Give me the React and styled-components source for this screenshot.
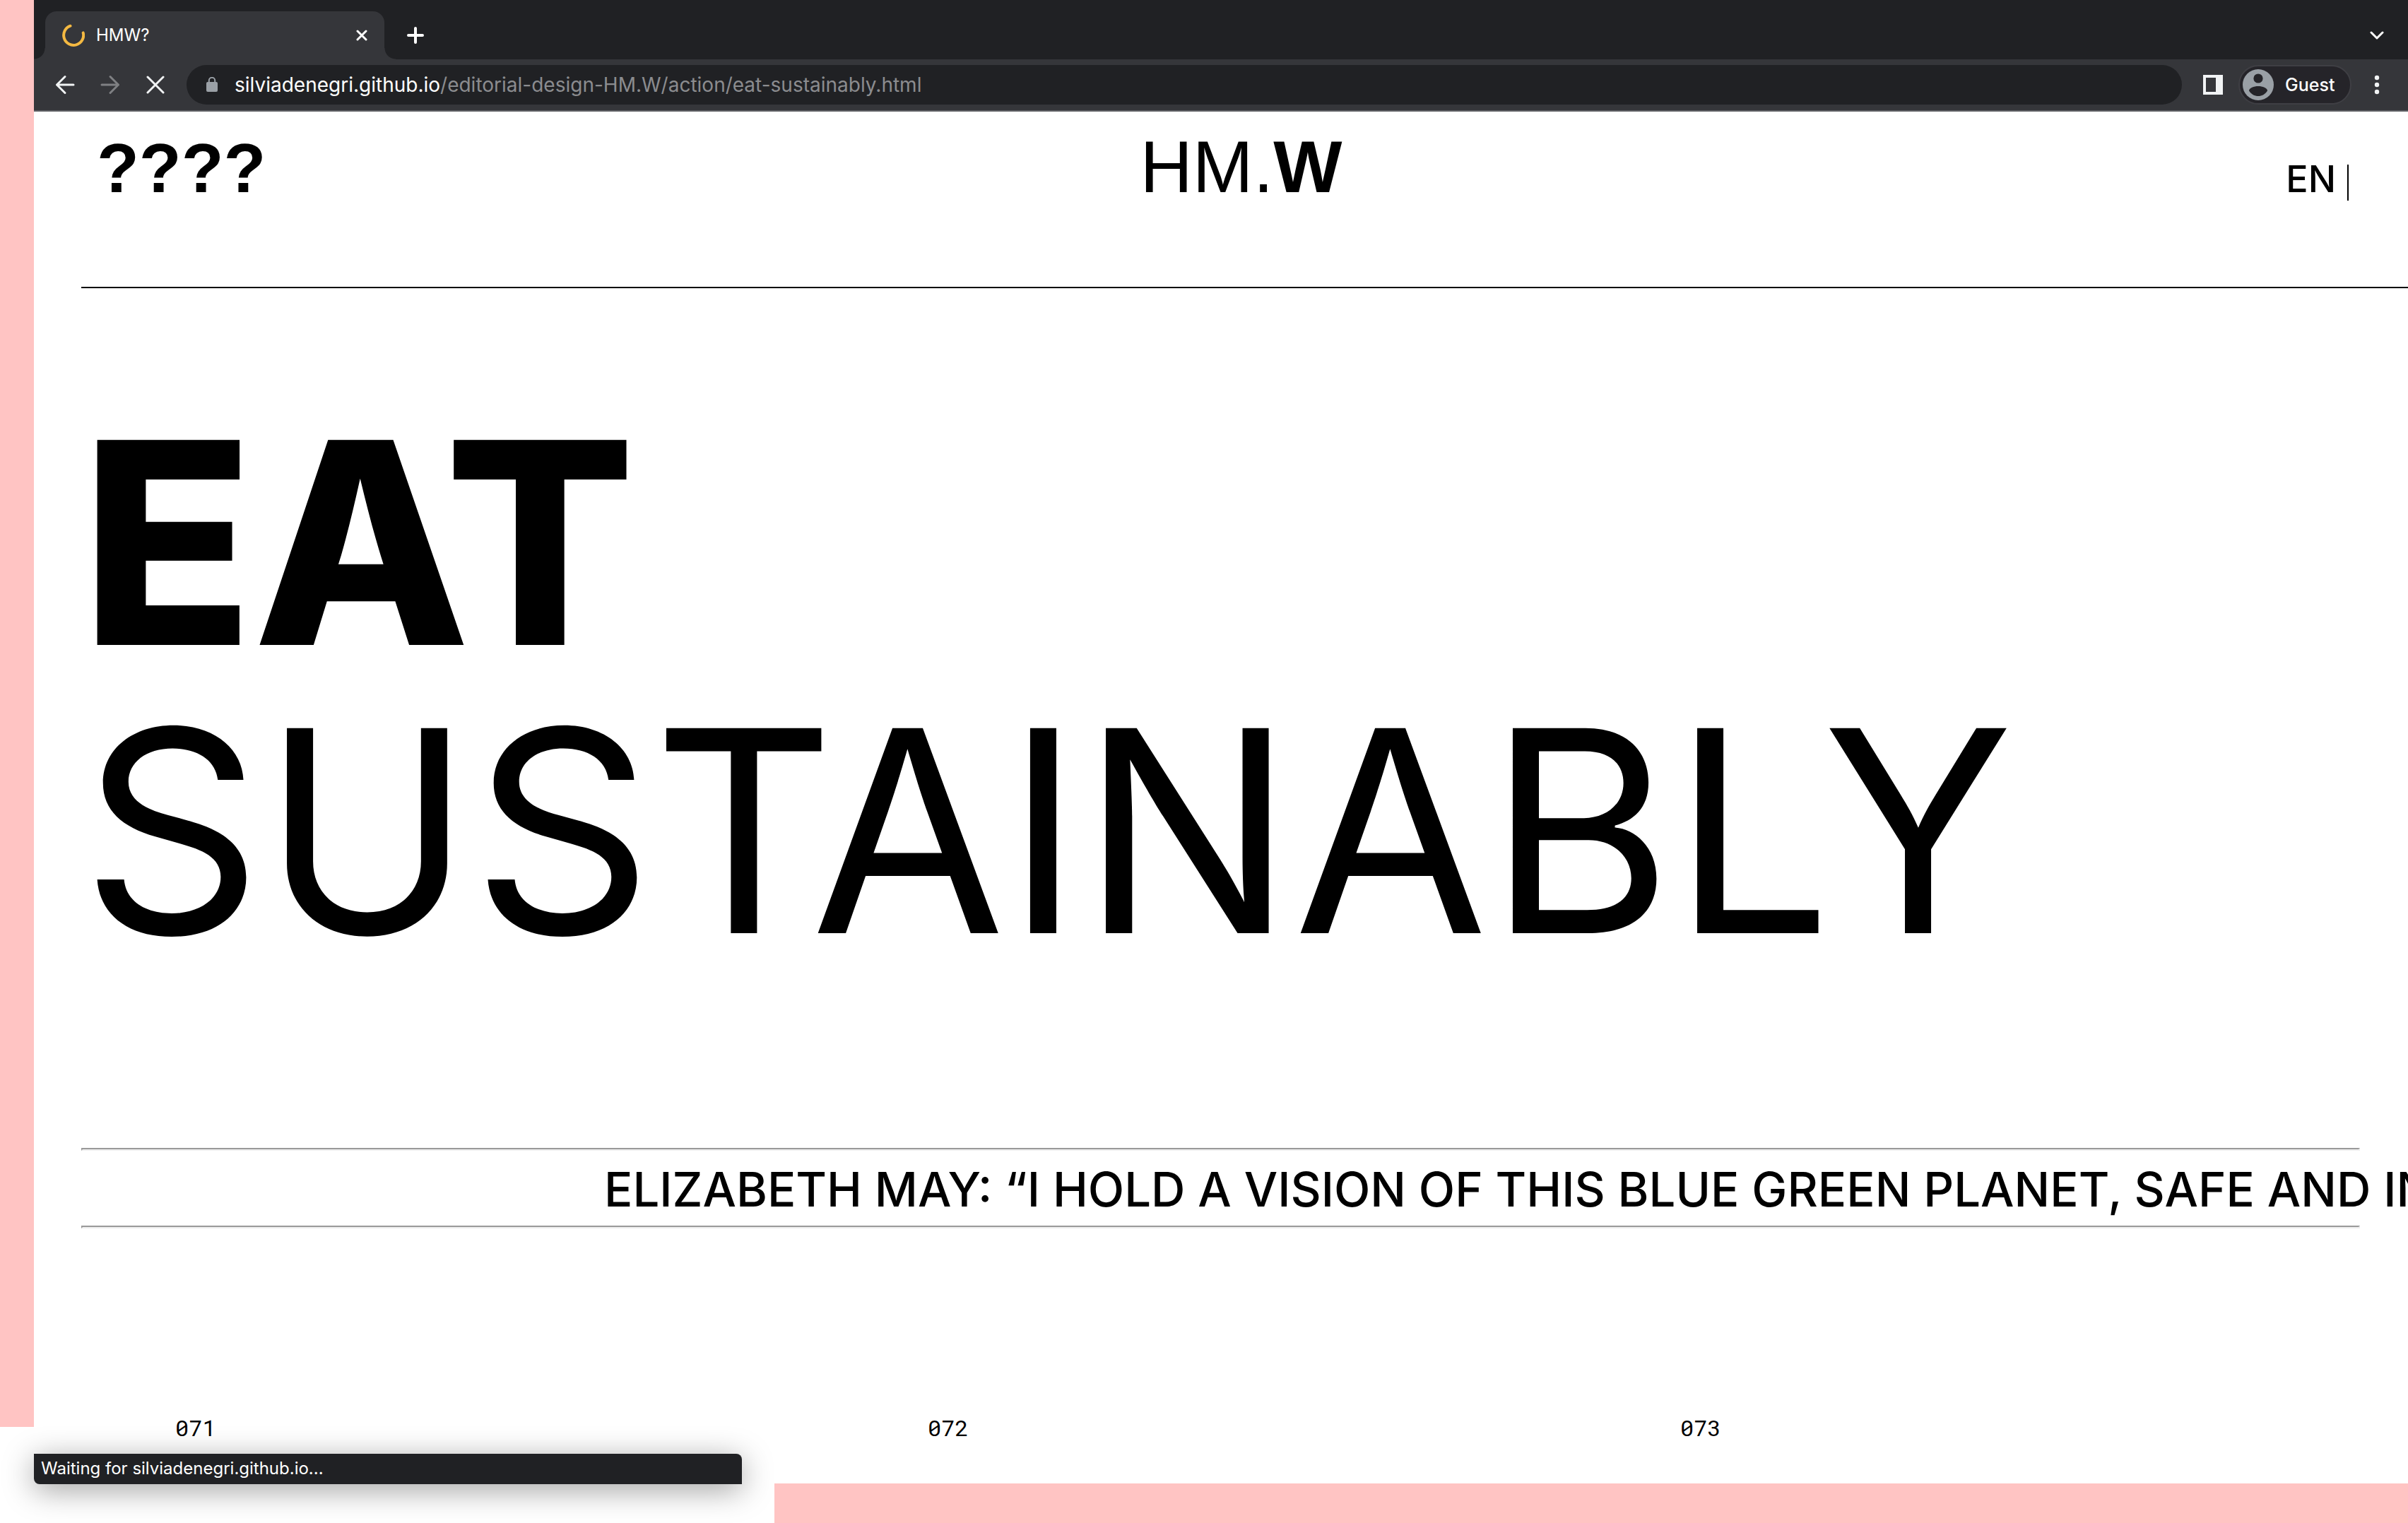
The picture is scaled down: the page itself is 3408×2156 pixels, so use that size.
import React from "react";
import styled, { createGlobalStyle } from "styled-components";

const color = {
  pink: "#ffc4c3",
  strip: "#202124",
  toolbar: "#35363a",
  edge: "#5f6064",
  icon: "#f1f3f4",
  muted: "#9aa0a6",
  dim: "#8b8c8f",
};

const GlobalStyle = createGlobalStyle`
  *, *::before, *::after { box-sizing: border-box; }
  body {
    margin: 0;
    background: #fff;
    color: #000;
    font-family: Inter, "Liberation Sans", sans-serif;
  }
  button, input {
    font: inherit;
    color: inherit;
    background: none;
    border: 0;
    padding: 0;
    margin: 0;
  }
  a { color: inherit; text-decoration: none; }
  svg { display: block; flex: none; }
`;

const Backdrop = styled.div`
  display: grid;
  grid-template-columns: 48px minmax(0, 1fr);
  grid-template-rows: 1fr 56px;
  min-height: 100vh;
`;

const SideBand = styled.div`
  background: ${color.pink};
  margin-bottom: 80px;
`;

const BottomBand = styled.div`
  grid-column: 1 / -1;
  background: ${color.pink};
  margin-left: 1096px;
`;

const BrowserWindow = styled.div`
  position: relative;
  display: flex;
  flex-direction: column;
  min-width: 0;
`;

/* ---------- browser chrome ---------- */

const TabStrip = styled.div`
  display: flex;
  align-items: flex-end;
  height: 84px;
  padding: 0 20px 0 16px;
  background: ${color.strip};
  color: #fff;
`;

const Tab = styled.div`
  position: relative;
  display: flex;
  align-items: center;
  width: 480px;
  height: 68px;
  padding: 0 24px;
  gap: 16px;
  border-radius: 16px 16px 0 0;
  background: ${color.toolbar};
  font-size: 24px;
  line-height: 32px;

  &::before,
  &::after {
    content: "";
    position: absolute;
    bottom: 0;
    width: 16px;
    height: 16px;
  }
  &::before {
    right: 100%;
    background: radial-gradient(circle at 0 0, transparent 15px, ${color.toolbar} 16px);
  }
  &::after {
    left: 100%;
    background: radial-gradient(circle at 100% 0, transparent 15px, ${color.toolbar} 16px);
  }
`;

const TabTitle = styled.span`
  flex: 1;
`;

const IconButton = styled.button`
  display: flex;
  align-items: center;
  justify-content: center;
  width: ${(p) => p.$width || 64}px;
  height: 56px;
  color: ${(p) => p.$color || color.icon};
`;

const StripButton = styled(IconButton)`
  height: 68px;
  color: #fff;
`;

const CloseButton = styled(IconButton)`
  width: 16px;
  height: 32px;
  color: #fff;
`;

const Spacer = styled.div`
  flex: 1;
`;

const Toolbar = styled.div`
  display: flex;
  align-items: center;
  height: 74px;
  padding: 0 8px 0 12px;
  background: ${color.toolbar};
  border-bottom: 2px solid ${color.edge};
`;

const AddressBar = styled.label`
  display: flex;
  align-items: center;
  flex: 1;
  min-width: 0;
  height: 56px;
  margin-left: 12px;
  padding: 0 28px;
  border-radius: 28px;
  background: ${color.strip};
  color: #fff;
  font-size: 28px;
  line-height: 36px;
`;

const LockSlot = styled.span`
  width: 40px;
  color: ${color.muted};
`;

const PathInput = styled.input`
  flex: 1;
  min-width: 0;
  color: ${color.dim};
  outline: none;
`;

const PanelButton = styled(IconButton)`
  width: auto;
  padding: 0 22px 0 30px;
`;

const Profile = styled.button`
  display: flex;
  align-items: center;
  gap: 16px;
  width: 160px;
  height: 56px;
  padding: 0 4px;
  border: 2px solid #3f3f44;
  border-radius: 28px;
  background: #252429;
  color: #fff;
  font-size: 25px;
  line-height: 32px;
  font-weight: 500;
`;

/* ---------- page ---------- */

const Page = styled.div`
  flex: 1;
  padding-left: 67px;
  background: #fff;
  overflow: hidden;
`;

const Header = styled.header`
  display: grid;
  grid-template-columns: 1fr auto 1fr;
  align-items: baseline;
  padding: 19px 84px 108px 22px;
  border-bottom: 2px solid #000;
  line-height: 120px;
`;

const Questions = styled.a`
  font-family: "Liberation Sans", Arial, sans-serif;
  font-size: 98px;
  font-weight: 700;
`;

const Logo = styled.a`
  padding-left: 52px;
  font-family: "Liberation Sans", Arial, sans-serif;
  font-size: 103px;
`;

const Languages = styled.nav`
  display: flex;
  align-items: center;
  justify-content: flex-end;
  font-size: 52px;
  font-weight: 500;
  line-height: 64px;
`;

const LanguageLink = styled.a`
  padding-right: 16px;
`;

const Separator = styled.span`
  width: 2px;
  height: 51px;
  margin-top: 8px;
  background: #000;
`;

const Title = styled.h1`
  margin: 156px 0 245px;
  font-size: 399px;
  font-weight: 400;
  line-height: 408px;
`;

const TitleLine = styled.span`
  display: block;
  font-weight: ${(p) => (p.$strong ? 800 : 400)};
`;

const Rule = styled.hr`
  height: 4px;
  margin: 0 68px 0 0;
  border: 2px solid;
  border-color: #9a9a9a #eeeeee #eeeeee #9a9a9a;
`;

const Marquee = styled.p`
  margin: 0;
  padding: 4px 0 0 740px;
  font-size: 67px;
  font-weight: 500;
  line-height: 102px;
  white-space: nowrap;
`;

const Cards = styled.ol`
  display: grid;
  grid-template-columns: repeat(3, 1fr);
  margin: 262px 98px 0 0;
  padding: 0 0 56px;
  list-style: none;
`;

const CardNumber = styled.li`
  padding-left: 133px;
  font-family: "Roboto Mono", "DejaVu Sans Mono", monospace;
  font-size: 32px;
  line-height: 40px;
`;

const StatusBubble = styled.div`
  position: absolute;
  left: 0;
  bottom: -1px;
  width: 1002px;
  height: 43px;
  padding: 0 10px;
  border-radius: 0 8px 0 8px;
  background: ${color.strip};
  box-shadow: 0 8px 44px rgba(0, 0, 0, 0.38);
  color: #fff;
  font-size: 24px;
  line-height: 42px;
  white-space: nowrap;
`;

/* ---------- icons ---------- */

const Line = ({ w = 32, h = w, sw = 3, d }) => (
  <svg width={w} height={h} viewBox={`0 0 ${w} ${h}`} fill="none" stroke="currentColor"
    strokeWidth={sw} strokeLinecap="round" strokeLinejoin="round" aria-hidden="true">
    <path d={d} />
  </svg>
);

const Spinner = () => (
  <svg width="32" height="32" viewBox="0 0 32 32" fill="none" stroke="#f4b942" strokeWidth="4" strokeLinecap="round" aria-hidden="true">
    <path d="M11.5 2.7A14 14 0 1 0 29.7 12.4" />
  </svg>
);

const Lock = () => (
  <svg width="16" height="22" viewBox="0 0 16 22" aria-hidden="true">
    <rect y="7" width="16" height="14" rx="2" fill="currentColor" />
    <path d="M3.8 8V5a4.2 4.2 0 0 1 8.4 0v3" fill="none" stroke="currentColor" strokeWidth="2" />
  </svg>
);

const SidePanel = () => (
  <svg width="28" height="28" viewBox="0 0 28 28" aria-hidden="true">
    <path fill="currentColor" fillRule="evenodd" d="M0 0h28v28H0zM4 4v20h14V4z" />
  </svg>
);

const Avatar = () => (
  <svg width="44" height="44" viewBox="0 0 44 44" aria-hidden="true">
    <circle cx="22" cy="22" r="22" fill="#9aa0a6" />
    <circle cx="22" cy="13" r="6.6" fill="#252429" />
    <path fill="#252429" d="M9 30.5C9 26.5 16 24 22 24s13 2.5 13 6.500C32 35.500 27 38 22 38S12 35.500 9 30.500z" />
  </svg>
);

const Dots = () => (
  <svg width="8" height="28" viewBox="0 0 8 28" fill="currentColor" aria-hidden="true">
    <circle cx="4" cy="4" r="3.200" />
    <circle cx="4" cy="14" r="3.200" />
    <circle cx="4" cy="24" r="3.200" />
  </svg>
);

export default function App() {
  return (
    <>
      <GlobalStyle />
      <Backdrop>
        <SideBand />
        <BrowserWindow>
          <TabStrip>
            <Tab>
              <Spinner />
              <TabTitle>HMW?</TabTitle>
              <CloseButton type="button" aria-label="Close tab">
                <Line w={16} d="M2 2l12 12M14 2L2 14" />
              </CloseButton>
            </Tab>
            <StripButton type="button" aria-label="New tab" $width={88}>
              <Line w={24} sw={4} d="M12 2v20M2 12h20" />
            </StripButton>
            <Spacer />
            <StripButton type="button" aria-label="Search tabs" $width={48}>
              <Line w={20} h={12} d="M2 2l8 8 8-8" />
            </StripButton>
          </TabStrip>

          <Toolbar>
            <IconButton type="button" aria-label="Back">
              <Line w={28} d="M26 14H2.500M14 2.500L2.500 14 14 25.500" />
            </IconButton>
            <IconButton type="button" aria-label="Forward" $color="#7f8083">
              <Line w={28} d="M2 14h23.500M14 2.500L25.500 14 14 25.500" />
            </IconButton>
            <IconButton type="button" aria-label="Stop loading">
              <Line w={26} d="M2 2l22 22M24 2L2 24" />
            </IconButton>
            <AddressBar>
              <LockSlot><Lock /></LockSlot>
              <span>silviadenegri.github.io</span>
              <PathInput aria-label="Address" defaultValue="/editorial-design-HM.W/action/eat-sustainably.html" />
            </AddressBar>
            <PanelButton type="button" aria-label="Side panel"><SidePanel /></PanelButton>
            <Profile type="button"><Avatar />Guest</Profile>
            <IconButton type="button" aria-label="Menu" $width={72}><Dots /></IconButton>
          </Toolbar>

          <Page>
            <Header>
              <Questions href="#questions">????</Questions>
              <Logo href="#home">HM.<b>W</b></Logo>
              <Languages>
                <LanguageLink href="#en">EN</LanguageLink>
                <Separator />
              </Languages>
            </Header>
            <main>
              <Title>
                <TitleLine $strong>EAT</TitleLine>
                <TitleLine>SUSTAINABLY</TitleLine>
              </Title>
              <Rule />
              <Marquee>ELIZABETH MAY: “I HOLD A VISION OF THIS BLUE GREEN PLANET, SAFE AND IN</Marquee>
              <Rule />
              <Cards>
                {["071", "072", "073"].map((n) => <CardNumber key={n}>{n}</CardNumber>)}
              </Cards>
            </main>
          </Page>
          <StatusBubble role="status">Waiting for silviadenegri.github.io...</StatusBubble>
        </BrowserWindow>
        <BottomBand />
      </Backdrop>
    </>
  );
}
